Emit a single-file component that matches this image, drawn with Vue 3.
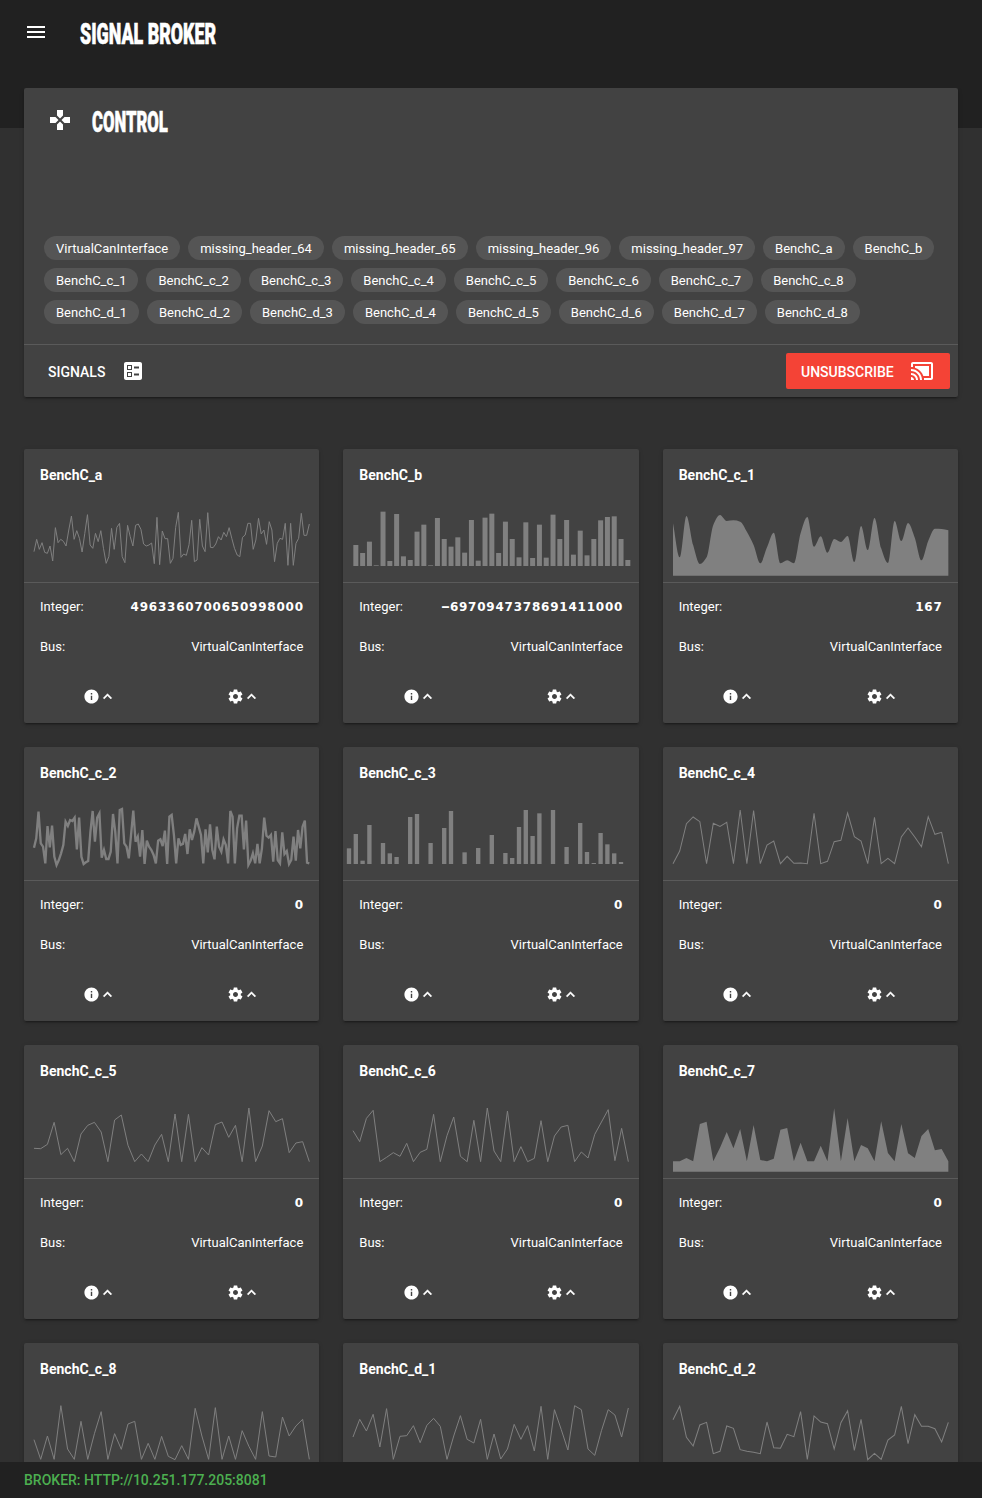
<script setup>
const chips = [
  'VirtualCanInterface', 'missing_header_64', 'missing_header_65', 'missing_header_96', 'missing_header_97',
  'BenchC_a', 'BenchC_b',
  ...[1, 2, 3, 4, 5, 6, 7, 8].map((n) => `BenchC_c_${n}`),
  ...[1, 2, 3, 4, 5, 6, 7, 8].map((n) => `BenchC_d_${n}`),
]

// Chart space: three units per CSS pixel, zero line at y = 180.
const WIDTH = 886
const BASE = 180
const LEFT = 30
const RIGHT = 856

function toPoints(values, base) {
  const step = (RIGHT - LEFT) / (values.length - 1)
  return values.map((v, i) => [LEFT + i * step, BASE - (base - v)])
}

function linePath(points) {
  return 'M' + points.map(([x, y]) => `${x.toFixed(1)} ${y}`).join('L')
}

// Monotone cubic interpolation, flat at every local extreme.
function curvePath(points) {
  const slope = (i) => (points[i + 1][1] - points[i][1]) / (points[i + 1][0] - points[i][0])
  const tangents = points.map((_, i) => {
    if (i === 0) return slope(0)
    if (i === points.length - 1) return slope(i - 1)
    const a = slope(i - 1)
    const b = slope(i)
    return a * b <= 0 ? 0 : (2 * a * b) / (a + b)
  })
  let d = `M${points[0][0]} ${points[0][1]}`
  for (let i = 1; i < points.length; i++) {
    const [x0, y0] = points[i - 1]
    const [x1, y1] = points[i]
    const h = (x1 - x0) / 3
    d += `C${x0 + h} ${y0 + tangents[i - 1] * h} ${x1 - h} ${y1 - tangents[i] * h} ${x1} ${y1}`
  }
  return d
}

function bars(card) {
  return card.values
    .map((v, i) => ({ x: card.start + i * 20.4, y: BASE - (card.base - v), h: card.base - v }))
    .filter((b) => b.h > 0)
}

const cards = [
  {
    name: 'BenchC_a', value: '4963360700650998000', type: 'line', base: 378,
    values: [335, 298, 328, 308, 337, 340, 318, 363, 263, 308, 298, 304, 318, 270, 228, 298, 272, 295, 336, 280, 224, 315, 325, 280, 305, 272, 325, 370, 350, 265, 328, 262, 250, 350, 368, 256, 290, 318, 256, 252, 268, 312, 318, 315, 309, 371, 232, 374, 273, 296, 296, 370, 355, 262, 217, 352, 342, 346, 314, 241, 365, 360, 238, 318, 335, 218, 322, 323, 312, 290, 300, 277, 290, 263, 295, 325, 345, 350, 292, 285, 250, 250, 328, 300, 235, 282, 270, 313, 245, 270, 365, 310, 295, 298, 250, 376, 250, 376, 310, 295, 220, 286, 286, 252],
  },
  {
    name: 'BenchC_b', sign: '-', value: '6970947378691411000', type: 'bars', base: 378, start: 31, bar: 15,
    values: [315, 339, 305, 376, 215, 363, 222, 349, 360, 275, 254, 376, 234, 297, 320, 292, 338, 240, 362, 233, 221, 339, 245, 297, 352, 247, 354, 254, 353, 224, 297, 240, 344, 272, 346, 297, 241, 231, 229, 297, 360],
  },
  {
    name: 'BenchC_c_1', value: '167', type: 'curve', base: 378,
    values: [250, 352, 228, 315, 372, 352, 255, 225, 243, 241, 245, 275, 315, 370, 322, 278, 370, 361, 370, 280, 231, 320, 289, 338, 297, 306, 288, 366, 258, 330, 234, 325, 369, 243, 303, 249, 293, 361, 303, 266, 267, 271],
  },
  {
    name: 'BenchC_c_2', value: '0', type: 'thick', base: 207,
    values: [158, 130, 50, 145, 155, 205, 93, 157, 92, 185, 210, 195, 175, 150, 80, 93, 75, 78, 68, 163, 68, 185, 207, 202, 198, 110, 48, 140, 68, 55, 188, 165, 192, 192, 170, 57, 110, 205, 45, 42, 145, 155, 190, 120, 47, 140, 125, 185, 105, 207, 137, 155, 165, 180, 205, 137, 133, 153, 107, 207, 65, 60, 120, 205, 130, 150, 147, 117, 177, 103, 135, 110, 70, 95, 120, 205, 103, 172, 88, 165, 193, 95, 155, 170, 133, 150, 205, 48, 65, 205, 100, 62, 62, 163, 77, 210, 197, 175, 205, 147, 205, 160, 68, 122, 128, 120, 200, 108, 195, 205, 112, 177, 168, 207, 195, 125, 197, 105, 160, 95, 77, 203, 205],
  },
  {
    name: 'BenchC_c_3', value: '0', type: 'bars', base: 207, start: 11.5, bar: 13,
    values: [160, 117, 197, 90, 207, 144, 175, 186, 207, 66, 57, 207, 144, 207, 99, 48, 207, 172, 207, 159, 207, 120, 207, 174, 189, 96, 45, 123, 55, 207, 45, 207, 156, 207, 84, 171, 204, 114, 148, 175, 201],
  },
  {
    name: 'BenchC_c_4', value: '0', type: 'line', base: 207,
    values: [206, 168, 86, 66, 80, 206, 85, 94, 82, 206, 45, 206, 47, 206, 150, 138, 206, 184, 205, 204, 206, 55, 206, 199, 140, 136, 54, 125, 138, 206, 67, 206, 190, 206, 126, 99, 126, 155, 65, 118, 112, 206],
  },
  {
    name: 'BenchC_c_5', value: '0', type: 'line', base: 200,
    values: [159, 160, 147, 81, 178, 159, 199, 116, 90, 81, 110, 199, 74, 59, 150, 199, 176, 199, 149, 117, 199, 56, 199, 57, 199, 157, 179, 88, 80, 126, 90, 199, 38, 199, 152, 46, 79, 70, 172, 143, 139, 199],
  },
  {
    name: 'BenchC_c_6', value: '0', type: 'line', base: 200,
    values: [106, 139, 69, 45, 199, 186, 172, 183, 144, 199, 171, 162, 57, 199, 121, 65, 183, 199, 75, 199, 38, 167, 199, 47, 199, 154, 199, 189, 76, 199, 122, 95, 90, 199, 170, 188, 117, 80, 43, 196, 99, 199],
  },
  {
    name: 'BenchC_c_7', value: '0', type: 'area', base: 201,
    values: [199, 199, 189, 199, 87, 80, 199, 158, 111, 160, 102, 199, 90, 195, 199, 191, 104, 99, 199, 143, 199, 199, 152, 199, 40, 199, 69, 199, 150, 160, 199, 79, 174, 199, 87, 175, 189, 123, 102, 166, 162, 199],
  },
  {
    name: 'BenchC_c_8', type: 'line', base: 209,
    values: [148, 207, 137, 207, 46, 176, 207, 93, 207, 130, 64, 207, 130, 177, 101, 93, 207, 159, 207, 138, 198, 208, 166, 207, 54, 137, 207, 52, 207, 137, 207, 121, 168, 207, 64, 197, 200, 80, 137, 107, 87, 207],
  },
  {
    name: 'BenchC_d_1', type: 'line', base: 209,
    values: [140, 87, 122, 72, 170, 55, 207, 138, 136, 106, 157, 105, 84, 108, 207, 137, 76, 147, 158, 87, 207, 131, 206, 176, 102, 147, 106, 182, 48, 207, 58, 117, 179, 46, 58, 176, 195, 121, 58, 74, 140, 53],
  },
  {
    name: 'BenchC_d_2', type: 'line', base: 209,
    values: [88, 48, 141, 167, 104, 96, 190, 183, 107, 114, 178, 183, 186, 190, 95, 172, 174, 132, 139, 64, 207, 77, 95, 100, 176, 97, 61, 180, 87, 208, 189, 207, 149, 134, 48, 160, 73, 108, 108, 115, 155, 96],
  },
].map((card) => {
  if (card.type === 'bars') return { ...card, rects: bars(card) }
  const points = toPoints(card.values, card.base)
  const path = card.type === 'curve' ? curvePath(points) : linePath(points)
  const filled = card.type === 'curve' || card.type === 'area'
  return { ...card, filled, path: filled ? `${path}L${RIGHT} 209L${LEFT} 209Z` : path }
})

const GEAR = 'M19.43 12.98c.04-.32.07-.64.07-.98s-.03-.66-.07-.98l2.11-1.65c.19-.15.24-.42.12-.64l-2-3.46c-.12-.22-.39-.3-.61-.22l-2.49 1c-.52-.4-1.08-.73-1.69-.98l-.38-2.65C14.46 2.18 14.25 2 14 2h-4c-.25 0-.46.18-.49.42l-.38 2.65c-.61.25-1.17.59-1.69.98l-2.49-1c-.23-.09-.49 0-.61.22l-2 3.46c-.13.22-.07.49.12.64l2.11 1.65c-.04.32-.07.65-.07.98s.03.66.07.98l-2.11 1.65c-.19.15-.24.42-.12.64l2 3.46c.12.22.39.3.61.22l2.49-1c.52.4 1.08.73 1.69.98l.38 2.65c.03.24.24.42.49.42h4c.25 0 .46-.18.49-.42l.38-2.65c.61-.25 1.17-.59 1.69-.98l2.49 1c.23.09.49 0 .61-.22l2-3.46c.12-.22.07-.49-.12-.64l-2.11-1.65zM12 15.5c-1.93 0-3.5-1.57-3.5-3.5s1.57-3.5 3.5-3.5 3.5 1.57 3.5 3.5-1.57 3.5-3.5 3.5z'
const INFO = 'M12 2C6.48 2 2 6.48 2 12s4.48 10 10 10 10-4.48 10-10S17.52 2 12 2zm1 15h-2v-6h2v6zm0-8h-2V7h2v2z'
const UP = 'M12 8l-6 6 1.41 1.41L12 10.83l4.59 4.58L18 14z'
</script>

<template>
  <div class="app">
    <header class="topbar">
      <svg class="icon" viewBox="0 0 24 24"><path d="M3 18h18v-2H3v2zm0-5h18v-2H3v2zm0-7v2h18V6H3z" /></svg>
      <h1 class="display brand">SIGNAL BROKER</h1>
    </header>

    <main class="content">
      <section class="control">
        <div class="control-head">
          <svg class="icon" viewBox="0 0 24 24"><path d="M15 7.5V2H9v5.5l3 3 3-3zM7.5 9H2v6h5.5l3-3-3-3zM9 16.5V22h6v-5.5l-3-3-3 3zM16.5 9l-3 3 3 3H22V9h-5.5z" /></svg>
          <h2 class="display heading">CONTROL</h2>
        </div>
        <div class="chips">
          <span v-for="chip in chips" :key="chip" class="chip">{{ chip }}</span>
        </div>
        <div class="actions">
          <button class="btn signals">
            <span>SIGNALS</span>
            <svg class="icon" viewBox="0 0 24 24"><path fill-rule="evenodd" d="M13 9.5h5v-2h-5v2zm0 7h5v-2h-5v2zm6 4.5H5c-1.1 0-2-.9-2-2V5c0-1.1.9-2 2-2h14c1.1 0 2 .9 2 2v14c0 1.1-.9 2-2 2zM6 11h5V6H6v5zm1-4h3v3H7V7zM6 18h5v-5H6v5zm1-4h3v3H7v-3z" /></svg>
          </button>
          <button class="btn unsubscribe">
            <span>UNSUBSCRIBE</span>
            <svg class="icon" viewBox="0 0 24 24"><path d="M1 18v3h3c0-1.66-1.34-3-3-3zm0-4v2c2.76 0 5 2.24 5 5h2c0-3.87-3.13-7-7-7zm18-7H5v1.63c3.96 1.28 7.09 4.41 8.37 8.37H19V7zM1 10v2c4.97 0 9 4.03 9 9h2c0-6.08-4.93-11-11-11zm20-7H3c-1.1 0-2 .9-2 2v3h2V5h18v14h-7v2h7c1.1 0 2-.9 2-2V5c0-1.1-.9-2-2-2z" /></svg>
          </button>
        </div>
      </section>

      <section class="grid">
        <article v-for="card in cards" :key="card.name" class="card">
          <h3 class="name">{{ card.name }}</h3>
          <svg class="chart" :viewBox="`0 0 ${WIDTH} 228`" preserveAspectRatio="none">
            <template v-if="card.rects">
              <rect v-for="(r, i) in card.rects" :key="i" :x="r.x" :y="r.y" :width="card.bar" :height="r.h" />
            </template>
            <path v-else :d="card.path" :class="{ stroke: !card.filled, thick: card.type === 'thick' }" />
          </svg>
          <template v-if="card.value">
            <div class="rows">
              <div class="row">
                <span>Integer:</span>
                <span class="number"><span v-if="card.sign" class="sign">{{ card.sign }}</span>{{ card.value }}</span>
              </div>
              <div class="row"><span>Bus:</span><span>VirtualCanInterface</span></div>
            </div>
            <div class="toggles">
              <button class="toggle">
                <svg viewBox="0 0 24 24"><path :d="INFO" /></svg>
                <svg class="arrow" viewBox="0 0 24 24"><path :d="UP" /></svg>
              </button>
              <button class="toggle">
                <svg viewBox="0 0 24 24"><path :d="GEAR" /></svg>
                <svg class="arrow" viewBox="0 0 24 24"><path :d="UP" /></svg>
              </button>
            </div>
          </template>
        </article>
      </section>
    </main>

    <footer class="status">BROKER: HTTP://10.251.177.205:8081</footer>
  </div>
</template>

<style>
html,
body {
  margin: 0;
  overflow: hidden;
  background: #303030;
}
</style>

<style scoped>
.app {
  height: 1498px;
  display: flex;
  flex-direction: column;
  overflow: hidden;
  background: #303030;
  color: #fff;
  font: 400 13px/20px Roboto, 'Liberation Sans', sans-serif;
}
h1, h2, h3 {
  margin: 0;
}
.topbar {
  flex: none;
  box-sizing: border-box;
  height: 128px;
  margin-bottom: -40px;
  padding: 20px 24px;
  display: flex;
  align-items: flex-start;
  background: #212121;
}
.icon {
  flex: none;
  width: 24px;
  height: 24px;
  fill: currentColor;
}
.display {
  font-size: 29px;
  line-height: 28px;
  font-weight: 900;
  white-space: nowrap;
  transform-origin: left center;
  -webkit-text-stroke: 0.6px #fff;
}
.brand {
  margin-left: 32px;
  transform: scaleX(0.615);
}
.heading {
  margin-left: 20px;
  transform: scaleX(0.575);
}
.content {
  flex: 1;
  min-height: 0;
  overflow: hidden;
  padding: 0 24px;
  position: relative;
}
.control {
  height: 309px;
  display: flex;
  flex-direction: column;
  background: #424242;
  border-radius: 2px;
  box-shadow: 0 3px 1px -2px rgba(0, 0, 0, 0.2), 0 2px 2px 0 rgba(0, 0, 0, 0.14), 0 1px 5px 0 rgba(0, 0, 0, 0.12);
}
.control-head {
  display: flex;
  align-items: flex-start;
  padding: 20px 24px 0;
  height: 128px;
}
.chips {
  flex: 1;
  display: flex;
  flex-wrap: wrap;
  align-content: flex-start;
  gap: 8px;
  padding: 0 20px;
}
.chip {
  box-sizing: border-box;
  height: 24px;
  padding: 1px 12px 0;
  border-radius: 12px;
  background: #555;
  line-height: 24px;
}
.actions {
  height: 52px;
  border-top: 1px solid #5a5a5a;
  display: flex;
  justify-content: space-between;
  align-items: center;
  padding: 0 8px;
}
.btn {
  height: 36px;
  display: flex;
  align-items: center;
  gap: 16px;
  padding: 0 16px;
  border: 0;
  border-radius: 2px;
  background: none;
  color: #fff;
  font: 500 14px/36px Roboto, 'Liberation Sans', sans-serif;
}
.btn span {
  padding-top: 1px;
}
.unsubscribe {
  width: 164px;
  padding: 0 15px;
  background: #f44336;
}
.grid {
  display: grid;
  grid-template-columns: repeat(3, 1fr);
  gap: 24px;
  margin-top: 52px;
}
.card {
  height: 274px;
  background: #424242;
  border-radius: 2px;
  box-shadow: 0 3px 1px -2px rgba(0, 0, 0, 0.2), 0 2px 2px 0 rgba(0, 0, 0, 0.14), 0 1px 5px 0 rgba(0, 0, 0, 0.12);
}
.name {
  height: 41px;
  padding: 16px 16px 0;
  font-size: 14px;
  line-height: 20px;
  font-weight: 700;
}
.chart {
  display: block;
  width: 100%;
  height: 76px;
  fill: #808080;
  border-bottom: 1px solid #5a5a5a;
}
.stroke {
  fill: none;
  stroke: #808080;
  stroke-width: 3;
}
.stroke.thick {
  stroke-width: 7;
}
.rows {
  padding: 4px 16px 0;
}
.row {
  height: 40px;
  display: flex;
  align-items: center;
  justify-content: space-between;
}
.number {
  margin-right: -0.5px;
  font: 700 12px/20px 'DejaVu Sans', sans-serif;
  letter-spacing: 0.77px;
}
.sign {
  display: inline-block;
  width: 9.1px;
  text-align: center;
  letter-spacing: 0;
  transform: scaleX(1.9);
}
.toggles {
  display: flex;
  padding: 11px 4px 0;
}
.toggle {
  flex: 1;
  height: 36px;
  display: flex;
  align-items: center;
  justify-content: center;
  padding: 0;
  border: 0;
  background: none;
  color: #fff;
}
.toggle svg {
  width: 17px;
  height: 17px;
  fill: currentColor;
}
.toggle .arrow {
  margin-left: -1px;
  stroke: currentColor;
  stroke-width: 0.7;
}
.status {
  flex: none;
  height: 36px;
  padding: 0 24px;
  background: #212121;
  color: #4caf50;
  font-size: 14px;
  font-weight: 500;
  line-height: 36px;
}
</style>
